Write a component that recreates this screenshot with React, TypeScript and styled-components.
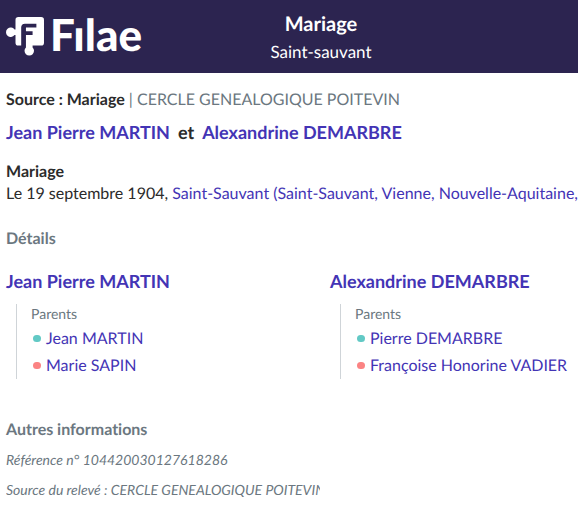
import React from "react";
import styled, { createGlobalStyle } from "styled-components";

const GlobalStyle = createGlobalStyle`
  *, *::before, *::after { box-sizing: border-box; }
  body {
    margin: 0;
    background: #fff;
    color: #2b2b2b;
    font-family: Lato, sans-serif;
    font-size: 16px;
    line-height: 24px;
    font-variant-ligatures: none;
    text-rendering: geometricPrecision;
    overflow-x: hidden;
  }
  h1, h2, h3, p, ul { margin: 0; padding: 0; font-size: inherit; }
`;

const Header = styled.header`
  display: grid;
  grid-template-columns: 136px 1fr 72px;
  align-items: center;
  height: 73px;
  padding: 0 6px;
  background: #2c2450;
  color: #fff;
`;

const Brand = styled.a`
  display: flex;
  align-items: center;
  gap: 6px;
  color: #fff;
  text-decoration: none;
`;

const Wordmark = styled.span`
  font-size: 44px;
  font-weight: 900;
  line-height: 44px;
  padding-bottom: 4px;
`;

const Heading = styled.div`
  padding-top: 2px;
  text-align: center;
  line-height: 28px;
`;

const Title = styled.h1`
  && { font-size: 20px; }
  font-weight: 700;
`;

const Place = styled.p`
  && { font-size: 17px; }
`;

const Main = styled.main`
  padding: 15px 0 12px 6px;
`;

const Source = styled.p`
  color: #6b7780;
`;

const Strong = styled.strong`
  color: #2b2b2b;
  font-weight: 700;
`;

const Couple = styled.h2`
  && { font-size: 18px; margin-top: 6px; }
  display: flex;
  gap: 8px;
  font-weight: 700;
  line-height: 28px;
`;

const Link = styled.a`
  color: #4334b5;
  text-decoration: none;
`;

const Event = styled.section`
  margin-top: 15px;
  line-height: 22px;
`;

const EventLine = styled.p`
  white-space: nowrap;
  overflow: hidden;
`;

const SectionTitle = styled.h2<{ $gap: number }>`
  && { margin-top: ${(p) => p.$gap}px; }
  color: #6b7780;
  font-weight: 700;
  line-height: 22px;
`;

const People = styled.div`
  display: grid;
  grid-template-columns: 324px 1fr;
  margin-top: 17px;
`;

const PersonName = styled.h3`
  && { font-size: 18px; }
  font-weight: 700;
  line-height: 28px;
`;

const Family = styled.div`
  margin: 9px 0 0 10px;
  padding-left: 14px;
  border-left: 1px solid #cfd4d8;
`;

const FamilyLabel = styled.p`
  && { font-size: 14px; }
  color: #6b7780;
  line-height: 20px;
`;

const ParentList = styled.ul`
  && { padding-top: 1px; }
  list-style: none;
`;

const Parent = styled.li<{ $color: string }>`
  display: flex;
  align-items: center;
  gap: 5px;
  padding-left: 2px;
  line-height: 27px;
  white-space: nowrap;
  &::before {
    content: "";
    width: 8px;
    height: 7px;
    border-radius: 4px;
    background: ${(p) => p.$color};
  }
`;

const Note = styled.p`
  && { font-size: 14px; margin-top: 8px; }
  max-width: 314px;
  overflow: hidden;
  white-space: nowrap;
  color: #6b7780;
  font-style: italic;
  line-height: 22px;
`;

const people = [
  {
    name: "Jean Pierre MARTIN",
    parents: [
      { name: "Jean MARTIN", color: "#62c9c5" },
      { name: "Marie SAPIN", color: "#fb8383" },
    ],
  },
  {
    name: "Alexandrine DEMARBRE",
    parents: [
      { name: "Pierre DEMARBRE", color: "#62c9c5" },
      { name: "Françoise Honorine VADIER", color: "#fb8383" },
    ],
  },
];

function PuzzleMark() {
  return (
    <svg width="40" height="41" viewBox="0 0 40 41" fill="#fff" aria-hidden="true">
      <path d="M13 0H37Q40 0 40 3V27Q40 30 37 30H28V32A5 5 0 1 1 21 32V19H28V15H21V11H32V7H20Q16 7 16 11V30H13Q10 30 10 27V19H9A5 5 0 1 1 9 13H10V3Q10 0 13 0Z" />
    </svg>
  );
}

export default function App() {
  return (
    <>
      <GlobalStyle />
      <Header>
        <Brand href="#">
          <PuzzleMark />
          <Wordmark>Fılae</Wordmark>
        </Brand>
        <Heading>
          <Title>Mariage</Title>
          <Place>Saint-sauvant</Place>
        </Heading>
      </Header>
      <Main>
        <Source>
          <Strong>Source : Mariage</Strong> | CERCLE GENEALOGIQUE POITEVIN
        </Source>
        <Couple>
          <Link href="#">Jean Pierre MARTIN</Link>
          <span>et</span>
          <Link href="#">Alexandrine DEMARBRE</Link>
        </Couple>
        <Event>
          <Strong>Mariage</Strong>
          <EventLine>
            Le 19 septembre 1904, <Link href="#">Saint-Sauvant (Saint-Sauvant, Vienne, Nouvelle-Aquitaine,</Link>
          </EventLine>
        </Event>
        <SectionTitle $gap={23}>Détails</SectionTitle>
        <People>
          {people.map((person) => (
            <section key={person.name}>
              <PersonName>
                <Link href="#">{person.name}</Link>
              </PersonName>
              <Family>
                <FamilyLabel>Parents</FamilyLabel>
                <ParentList>
                  {person.parents.map((parent) => (
                    <Parent key={parent.name} $color={parent.color}>
                      <Link href="#">{parent.name}</Link>
                    </Parent>
                  ))}
                </ParentList>
              </Family>
            </section>
          ))}
        </People>
        <SectionTitle $gap={40}>Autres informations</SectionTitle>
        <Note>Référence n° 104420030127618286</Note>
        <Note>Source du relevé : CERCLE GENEALOGIQUE POITEVIN</Note>
      </Main>
    </>
  );
}
